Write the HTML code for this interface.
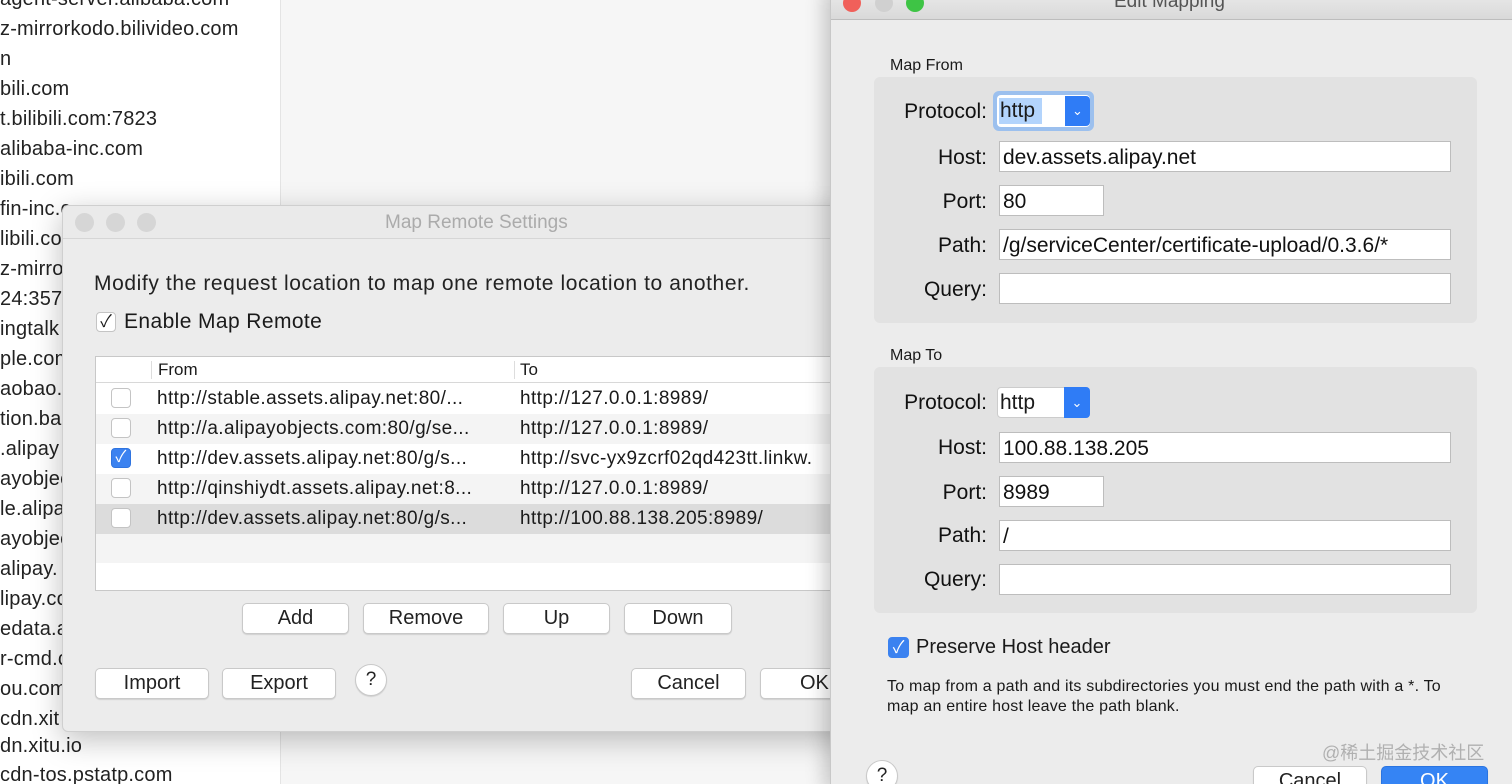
<!DOCTYPE html>
<html><head><meta charset="utf-8"><style>
*{box-sizing:border-box;margin:0;padding:0}
html,body{width:1512px;height:784px;overflow:hidden}
body{position:relative;font-family:"Liberation Sans","Noto Sans CJK SC",sans-serif;background:#fff;color:#1a1a1a}
.a{position:absolute}
.list div{position:absolute;left:0;font-size:20px;letter-spacing:0.2px;white-space:nowrap;color:#222}
.btn{position:absolute;background:#fff;border:1px solid #c9c9c9;border-radius:5px;box-shadow:0 1px 1px rgba(0,0,0,.12);font-size:20px;text-align:center;color:#222}
.fld{position:absolute;background:#fff;border:1px solid #bdbdbd;font-size:21px;padding-left:3px;line-height:31px;color:#111}
.lbl{position:absolute;font-size:21px;text-align:right;width:120px;color:#111}
.cb{position:absolute;width:20px;height:20px;border:1px solid #c4c4c4;border-radius:4px;background:#fff}
.row{position:absolute;left:0;width:740px;height:30px;font-size:19px;letter-spacing:0.4px;line-height:30px}
.row span{position:absolute}
</style></head><body>
<div class="a" style="left:280px;top:0;width:550px;height:784px;background:#f6f6f6;border-left:1px solid #e4e4e4"></div>
<div class="list">
<div style="top:-12px">agent-server.alibaba.com</div>
<div style="top:18px">z-mirrorkodo.bilivideo.com</div>
<div style="top:48px">n</div>
<div style="top:78px">bili.com</div>
<div style="top:108px">t.bilibili.com:7823</div>
<div style="top:138px">alibaba-inc.com</div>
<div style="top:168px">ibili.com</div>
<div style="top:198px">fin-inc.c</div>
<div style="top:228px">libili.co</div>
<div style="top:258px">z-mirro</div>
<div style="top:288px">24:3572</div>
<div style="top:318px">ingtalk</div>
<div style="top:348px">ple.com</div>
<div style="top:378px">aobao.</div>
<div style="top:408px">tion.bai</div>
<div style="top:438px">.alipay</div>
<div style="top:468px">ayobjec</div>
<div style="top:498px">le.alipa</div>
<div style="top:528px">ayobjec</div>
<div style="top:558px">alipay.</div>
<div style="top:588px">lipay.co</div>
<div style="top:618px">edata.a</div>
<div style="top:648px">r-cmd.c</div>
<div style="top:678px">ou.com</div>
<div style="top:708px">cdn.xit</div>
<div style="top:735px">dn.xitu.io</div>
<div style="top:764px">cdn-tos.pstatp.com</div>
</div>

<div class="a" style="left:62px;top:205px;width:800px;height:527px;background:#ececec;border:1px solid #cfcfcf;border-radius:6px;box-shadow:0 8px 30px rgba(0,0,0,.25);overflow:hidden">
 <div class="a" style="left:0;top:0;width:100%;height:33px;background:#eaeaea;border-bottom:1px solid #d6d6d6"></div>
 <div class="a" style="left:12px;top:7px;width:19px;height:19px;border-radius:50%;background:#d6d6d6"></div>
 <div class="a" style="left:43px;top:7px;width:19px;height:19px;border-radius:50%;background:#d6d6d6"></div>
 <div class="a" style="left:74px;top:7px;width:19px;height:19px;border-radius:50%;background:#d6d6d6"></div>
 <div class="a" style="left:322px;top:6px;font-size:19px;color:#ababab">Map Remote Settings</div>
 <div class="a" style="left:31px;top:66px;font-size:21px;letter-spacing:0.6px;color:#222">Modify the request location to map one remote location to another.</div>
 <div class="cb" style="left:33px;top:106px;font-size:17px;line-height:18px;text-align:center">✓</div>
 <div class="a" style="left:61px;top:104px;font-size:21px;letter-spacing:0.4px">Enable Map Remote</div>
 <div class="a" style="left:32px;top:150px;width:760px;height:235px;background:#fff;border:1px solid #c8c8c8;overflow:hidden">
  <div class="a" style="left:0;top:0;width:100%;height:26px;border-bottom:1px solid #d8d8d8;font-size:17px;line-height:26px">
   <div class="a" style="left:55px;top:4px;height:18px;border-left:1px solid #ddd"></div>
   <span class="a" style="left:62px">From</span>
   <div class="a" style="left:418px;top:4px;height:18px;border-left:1px solid #ddd"></div>
   <span class="a" style="left:424px">To</span>
  </div>
  <div class="row" style="top:27px"><div class="cb" style="left:15px;top:4px"></div><span style="left:61px">http://stable.assets.alipay.net:80/...</span><span style="left:424px">http://127.0.0.1:8989/</span></div>
  <div class="row" style="top:57px;background:#f4f4f4"><div class="cb" style="left:15px;top:4px"></div><span style="left:61px">http://a.alipayobjects.com:80/g/se...</span><span style="left:424px">http://127.0.0.1:8989/</span></div>
  <div class="row" style="top:87px"><div class="cb" style="left:15px;top:4px;background:#3b82f0;border-color:#2f74e0;color:#fff;font-size:16px;line-height:18px;text-align:center">✓</div><span style="left:61px">http://dev.assets.alipay.net:80/g/s...</span><span style="left:424px">http://svc-yx9zcrf02qd423tt.linkw.</span></div>
  <div class="row" style="top:117px;background:#f4f4f4"><div class="cb" style="left:15px;top:4px"></div><span style="left:61px">http://qinshiydt.assets.alipay.net:8...</span><span style="left:424px">http://127.0.0.1:8989/</span></div>
  <div class="row" style="top:147px;background:#dcdcdc"><div class="cb" style="left:15px;top:4px"></div><span style="left:61px">http://dev.assets.alipay.net:80/g/s...</span><span style="left:424px">http://100.88.138.205:8989/</span></div>
  <div class="row" style="top:177px;background:#f4f4f4;height:29px"></div>
 </div>
 <div class="btn" style="left:179px;top:397px;width:107px;height:31px;line-height:29px">Add</div>
 <div class="btn" style="left:300px;top:397px;width:126px;height:31px;line-height:29px">Remove</div>
 <div class="btn" style="left:440px;top:397px;width:107px;height:31px;line-height:29px">Up</div>
 <div class="btn" style="left:561px;top:397px;width:108px;height:31px;line-height:29px">Down</div>
 <div class="btn" style="left:32px;top:462px;width:114px;height:31px;line-height:29px">Import</div>
 <div class="btn" style="left:159px;top:462px;width:114px;height:31px;line-height:29px">Export</div>
 <div class="btn" style="left:292px;top:458px;width:32px;height:32px;border-radius:50%;line-height:30px;font-size:19px">?</div>
 <div class="btn" style="left:568px;top:462px;width:115px;height:31px;line-height:29px">Cancel</div>
 <div class="btn" style="left:697px;top:462px;width:115px;height:31px;line-height:29px;text-align:left;padding-left:39px">OK</div>
</div>

<div class="a" style="left:830px;top:-10px;width:690px;height:800px;background:#ececec;border-left:1px solid #c8c8c8;box-shadow:-6px 0 18px rgba(0,0,0,.2)">
 <div class="a" style="left:0;top:0;width:100%;height:30px;background:linear-gradient(#ebebeb,#d9d9d9);border-bottom:1px solid #bdbdbd"></div>
 <div class="a" style="left:12px;top:4px;width:18px;height:18px;border-radius:50%;background:#f0605a"></div>
 <div class="a" style="left:44px;top:4px;width:18px;height:18px;border-radius:50%;background:#d0d0d0"></div>
 <div class="a" style="left:75px;top:4px;width:18px;height:18px;border-radius:50%;background:#3ec445"></div>
 <div class="a" style="left:283px;top:1px;font-size:19px;color:#555">Edit Mapping</div>
</div>
<div class="a" style="left:890px;top:57px;font-size:16px">Map From</div>
<div class="a" style="left:874px;top:77px;width:603px;height:246px;background:#e2e2e2;border-radius:6px"></div>
<div class="lbl" style="left:867px;top:100px">Protocol:</div>
<div class="a" style="left:993px;top:91px;width:101px;height:40px;border-radius:6px;background:#9cc0ee"></div>
<div class="a" style="left:997px;top:95px;width:93px;height:32px;background:#fff;border-radius:4px"></div>
<div class="a" style="left:999px;top:98px;width:43px;height:26px;background:#b3d4fc"></div>
<div class="a" style="left:1000px;top:99px;font-size:21px">http</div>
<div class="a" style="left:1065px;top:96px;width:25px;height:30px;background:#2f7cf6;border-radius:0 4px 4px 0;color:#fff;font-size:13px;text-align:center;line-height:30px">&#8964;</div>
<div class="lbl" style="left:867px;top:146px">Host:</div>
<div class="fld" style="left:999px;top:141px;width:452px;height:31px">dev.assets.alipay.net</div>
<div class="lbl" style="left:867px;top:190px">Port:</div>
<div class="fld" style="left:999px;top:185px;width:105px;height:31px">80</div>
<div class="lbl" style="left:867px;top:234px">Path:</div>
<div class="fld" style="left:999px;top:229px;width:452px;height:31px">/g/serviceCenter/certificate-upload/0.3.6/*</div>
<div class="lbl" style="left:867px;top:278px">Query:</div>
<div class="fld" style="left:999px;top:273px;width:452px;height:31px"></div>

<div class="a" style="left:890px;top:347px;font-size:16px">Map To</div>
<div class="a" style="left:874px;top:367px;width:603px;height:246px;background:#e2e2e2;border-radius:6px"></div>
<div class="lbl" style="left:867px;top:391px">Protocol:</div>
<div class="a" style="left:997px;top:387px;width:93px;height:31px;background:#fff;border-radius:4px;border:1px solid #ccc"></div>
<div class="a" style="left:1000px;top:391px;font-size:21px">http</div>
<div class="a" style="left:1064px;top:387px;width:26px;height:31px;background:#2f7cf6;border-radius:0 4px 4px 0;color:#fff;font-size:13px;text-align:center;line-height:31px">&#8964;</div>
<div class="lbl" style="left:867px;top:436px">Host:</div>
<div class="fld" style="left:999px;top:432px;width:452px;height:31px">100.88.138.205</div>
<div class="lbl" style="left:867px;top:481px">Port:</div>
<div class="fld" style="left:999px;top:476px;width:105px;height:31px">8989</div>
<div class="lbl" style="left:867px;top:524px">Path:</div>
<div class="fld" style="left:999px;top:520px;width:452px;height:31px">/</div>
<div class="lbl" style="left:867px;top:568px">Query:</div>
<div class="fld" style="left:999px;top:564px;width:452px;height:31px"></div>

<div class="a" style="left:888px;top:637px;width:21px;height:21px;border-radius:4px;background:#3b82f0;color:#fff;font-size:17px;text-align:center;line-height:21px">✓</div>
<div class="a" style="left:916px;top:636px;font-size:20px">Preserve Host header</div>
<div class="a" style="left:887px;top:677px;width:590px;font-size:16px;letter-spacing:0.2px;line-height:20px">To map from a path and its subdirectories you must end the path with a *. To map an entire host leave the path blank.</div>
<div class="a" style="left:1322px;top:739px;font-size:18px;color:#b0b0b0">@稀土掘金技术社区</div>
<div class="btn" style="left:866px;top:760px;width:32px;height:32px;border-radius:50%;line-height:30px;font-size:19px">?</div>
<div class="btn" style="left:1253px;top:766px;width:114px;height:31px;line-height:29px">Cancel</div>
<div class="btn" style="left:1381px;top:766px;width:107px;height:31px;line-height:29px;background:#3584f4;border-color:#2a74e0;color:#fff">OK</div>
</body></html>
